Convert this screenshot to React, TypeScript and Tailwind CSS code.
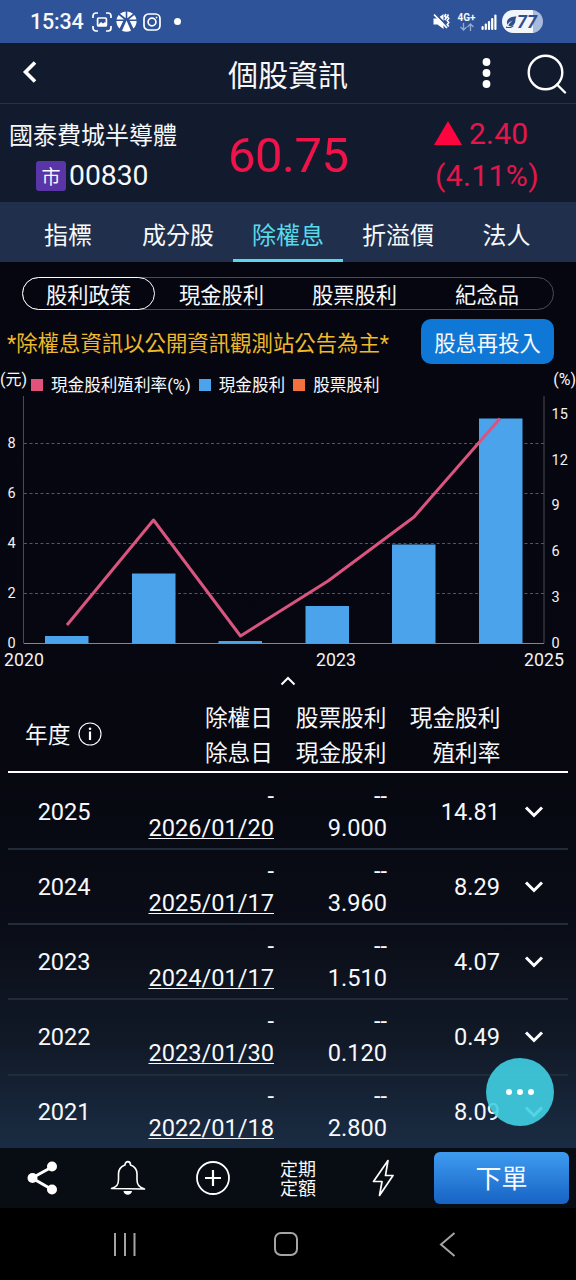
import React from "react";

const tabs = ["指標", "成分股", "除權息", "折溢價", "法人"];

const subTabs = ["股利政策", "現金股利", "股票股利", "紀念品"];

const legend = [
  { label: "現金股利殖利率(%)", color: "bg-[#e0517c]", gap: "mr-[8px]" },
  { label: "現金股利", color: "bg-[#4ba3ec]", gap: "mr-[8px]" },
  { label: "股票股利", color: "bg-[#f2713f]", gap: "" },
];

const rows = [
  { year: "2025", date: "2026/01/20", cash: "9.000", rate: "14.81" },
  { year: "2024", date: "2025/01/17", cash: "3.960", rate: "8.29" },
  { year: "2023", date: "2024/01/17", cash: "1.510", rate: "4.07" },
  { year: "2022", date: "2023/01/30", cash: "0.120", rate: "0.49" },
  { year: "2021", date: "2022/01/18", cash: "2.800", rate: "8.09" },
];

// chart coordinates
const bars = [
  { x: 45, y: 241 },
  { x: 132, y: 178.5 },
  { x: 218.5, y: 246 },
  { x: 305.5, y: 211 },
  { x: 392, y: 149.5 },
  { x: 479, y: 23.5 },
];

const leftTicks = [
  { v: "8", y: 48.5 },
  { v: "6", y: 98.5 },
  { v: "4", y: 148.5 },
  { v: "2", y: 198.5 },
  { v: "0", y: 248.5 },
];

const rightTicks = [
  { v: "15", y: 18.5 },
  { v: "12", y: 64.5 },
  { v: "9", y: 110 },
  { v: "6", y: 156 },
  { v: "3", y: 201.5 },
  { v: "0", y: 247.5 },
];

function StatusBar() {
  return (
    <div className="flex h-[43px] shrink-0 items-center bg-[#2f5398] pl-[30px] pr-[33px]">
      <span className="w-[62px] text-[21.5px] font-medium leading-none tracking-[-0.2px]">15:34</span>
      <svg width="20" height="20" viewBox="0 0 20 20" fill="none" stroke="#fff" strokeWidth="1.7">
        <path d="M1 6V4a3 3 0 0 1 3-3h2M14 1h2a3 3 0 0 1 3 3v2M19 14v2a3 3 0 0 1-3 3h-2M6 19H4a3 3 0 0 1-3-3v-2" />
        <rect x="5.6" y="6" width="8.800" height="8" rx="1" />
        <path d="M6 13l3-3 2 1.5 2-1.5 1 1v3H6z" fill="#fff" stroke="none" />
      </svg>
      <svg className="ml-[4px]" width="21" height="21" viewBox="0 0 21 21" fill="#fff">
        <path d="M9.700 0.500v6.800L4 2.700A10 10 0 0 1 9.700.5zM11.300.5v6.800L17 2.700A10 10 0 0 0 11.300.5z" />
        <path d="M2.700 4l5.500 4.500H.500A10 10 0 0 1 2.700 4zM18.300 4l-5.500 4.500h7.700A10 10 0 0 0 18.300 4z" />
        <path d="M.4 10h6.800L3.600 17.500A10 10 0 0 1 .4 10zM20.600 10h-6.800l3.600 7.500a10 10 0 0 0 3.200-7.500z" />
        <path d="M10.500 9.500L15 19.800q-4.500 2-9 0z" />
      </svg>
      <svg className="ml-[6px]" width="18" height="18" viewBox="0 0 18 18" fill="none" stroke="#fff" strokeWidth="1.7">
        <rect x="1" y="1" width="16" height="16" rx="4.500" />
        <circle cx="9" cy="9" r="3.900" />
        <circle cx="13.500" cy="4.500" r="0.500" fill="#fff" strokeWidth="1" />
      </svg>
      <span className="ml-[13px] size-[6.500px] rounded-full bg-white" />

      <div className="ml-auto flex items-center">
        <svg width="17" height="17" viewBox="0 0 17 17" fill="none" stroke="#fff">
          <path d="M0.500 5.500h4l6-4.500v15l-6-4.500h-4z" fill="#fff" stroke="none" />
          <path d="M2 0.500l14 14" stroke="#2f5398" strokeWidth="1.800" />
          <path d="M1 1.500l13 13.500" strokeWidth="1.800" />
          <path d="M13 1l-1.300 2 1.500 2-1.500 2M15.500 1.500l-1.300 2 1.500 2-1.500 2 1.500 2-1.500 2 1.500 2" strokeWidth="1.600" />
        </svg>
        <div className="ml-[6px] flex w-[21px] flex-col items-center">
          <span className="text-[10px] font-bold leading-[10px]">4G+</span>
          <svg width="14" height="8" viewBox="0 0 14 8" fill="none" stroke="#91a9d5" strokeWidth="1.300">
            <path d="M3.500 0v7M0.500 4l3 3 3-3M10.500 8V1M7.500 4l3-3 3 3" />
          </svg>
        </div>
        <svg className="ml-[4px]" width="16" height="16" viewBox="0 0 16 16" fill="#fff">
          <rect x="0.500" y="12" width="2.200" height="4" rx="1" />
          <rect x="3.700" y="9.500" width="2.200" height="6.500" rx="1" />
          <rect x="6.900" y="7" width="2.200" height="9" rx="1" />
          <rect x="10.100" y="4" width="2.200" height="12" rx="1" />
          <rect x="13.300" y="0.500" width="2.200" height="15.500" rx="1" />
        </svg>
        <div className="ml-[5px] flex h-[23px] w-[41px] items-center rounded-full bg-[linear-gradient(90deg,#f1f5fc_76%,#a9bbdc_76%)] pl-[4px] text-[#2f4f8c]">
          <svg width="11" height="12" viewBox="0 0 12 13" fill="currentColor">
            <path d="M11.500 0.500C6 0 1 2.500 1 7c0 1 .3 1.800.7 2.400C3 7 5 5.500 8 4.500 5.500 6 3.500 8 2.500 10.500 7.500 12.500 10.500 8 10.300 4c.1-1.500.5-2.500 1.200-3.500z" />
            <path d="M0 12c3 1.200 6 .6 8-1.500" fill="none" stroke="currentColor" strokeWidth="1.200" />
          </svg>
          <span className="text-[18px] font-bold italic leading-none">77</span>
        </div>
      </div>
    </div>
  );
}

function Header() {
  return (
    <div className="flex h-[61px] shrink-0 items-center border-b border-[#243250] bg-[#121b2e] pl-[22px] pr-[9px]">
      <svg className="-mt-[2px]" width="15" height="22" viewBox="0 0 15 22" fill="none" stroke="#fff" strokeWidth="3.600">
        <path d="M13 1.500L3.500 11l9.500 9.500" />
      </svg>
      <h1 className="ml-auto pt-[5px] text-[30px] leading-none">個股資訊</h1>
      <svg className="-mt-[1px] ml-[134px]" width="9" height="30" viewBox="0 0 9 30" fill="#fff">
        <circle cx="4.500" cy="4" r="3.900" />
        <circle cx="4.500" cy="15" r="3.900" />
        <circle cx="4.500" cy="26" r="3.900" />
      </svg>
      <svg className="ml-[36px] mt-[2px]" width="40" height="40" viewBox="0 0 40 40" fill="none" stroke="#fff" strokeWidth="2.400">
        <circle cx="18.500" cy="18.500" r="16.800" />
        <path d="M30 30.500l8 8" strokeLinecap="round" />
      </svg>
    </div>
  );
}

function Quote() {
  return (
    <div className="flex h-[98px] shrink-0 bg-[#121b2e]">
      <div className="flex w-[219px] flex-col pl-[9px] pt-[18px]">
        <div className="whitespace-nowrap text-[24px] leading-[28px]">國泰費城半導體</div>
        <div className="ml-[27px] mt-[8px] flex items-center">
          <span className="flex h-[30px] w-[30px] items-center justify-center rounded-[3px] bg-[#5a35a8] pt-[3px] text-[19px] leading-none">
            市
          </span>
          <span className="ml-[3px] pt-[1px] text-[28.300px] leading-[34px]">00830</span>
        </div>
      </div>
      <div className="w-[215px] pl-[9px] pt-[24px] text-[49px] leading-[56px] tracking-[-0.500px] text-[#f0134a]">60.75</div>
      <div className="text-[30px] leading-[42px] text-[#e4164a]">
        <div className="flex items-center pt-[9px]">
          <svg className="-mt-[2px]" width="28" height="24" viewBox="0 0 28 24" fill="#ff0540">
            <path d="M14 0l14 24H0z" />
          </svg>
          <span className="ml-[7px] tracking-[0.200px]">2.40</span>
        </div>
        <div className="pl-[1px] tracking-[0.400px]">(4.11%)</div>
      </div>
    </div>
  );
}

function Tabs() {
  return (
    <div className="flex h-[60px] shrink-0 bg-[#202f4b] px-[13px]">
      {tabs.map((tab) => (
        <div
          key={tab}
          className={
            tab === "除權息"
              ? "flex w-[110px] justify-center border-b-[3px] border-[#57d9ea] pt-[17px] text-[24px] leading-[34px] text-[#57d9ea]"
              : "flex w-[110px] justify-center pt-[17px] text-[24px] leading-[34px] last:w-[107px]"
          }
        >
          {tab}
        </div>
      ))}
    </div>
  );
}

function Chart() {
  return (
    <svg className="block shrink-0" width="576" height="275" viewBox="0 0 576 275">
      {leftTicks.slice(0, 4).map((t) => (
        <path key={t.v} d={`M24 ${t.y}H544`} stroke="#55575d" strokeDasharray="3 2.500" />
      ))}
      <path d="M24 248.500H544" stroke="#85878c" />
      <path d="M23.500 1V248.500M544 1V248.500" stroke="#4a4b52" />
      {bars.map((b) => (
        <rect key={b.x} x={b.x} y={b.y} width="43.500" height={248.5 - b.y} fill="#4ba3ec" />
      ))}
      <path
        d="M67 230L153.500 125L240.500 241L328 186L414 122L500 23.500"
        fill="none"
        stroke="#d95580"
        strokeWidth="3"
        strokeLinejoin="round"
      />
      <g fill="#f2f2f4" fontSize="14.500">
        {leftTicks.map((t) => (
          <text key={t.v} x="7.500" y={t.y + 4.5}>
            {t.v}
          </text>
        ))}
        {rightTicks.map((t) => (
          <text key={t.v} x="551.500" y={t.y + 5}>
            {t.v}
          </text>
        ))}
      </g>
      <g fill="#f2f2f4" fontSize="17.700" textAnchor="middle">
        <text x="24" y="271">2020</text>
        <text x="336" y="271">2023</text>
        <text x="544" y="271">2025</text>
      </g>
    </svg>
  );
}

function ChevronDown() {
  return (
    <svg width="20" height="14" viewBox="0 0 20 14" fill="none" stroke="#fff" strokeWidth="3">
      <path d="M2 2.500l8 8 8-8" />
    </svg>
  );
}

function TableHead() {
  return (
    <div className="mx-[8px] flex h-[81px] shrink-0 border-b-2 border-white text-[22.700px] leading-[34.500px]">
      <div className="flex w-[120px] items-center pl-[17px] pt-[5px]">
        <span className="pt-[4px]">年度</span>
        <svg className="ml-[8px]" width="24" height="24" viewBox="0 0 24 24" fill="none" stroke="#fff">
          <circle cx="12" cy="12" r="11" strokeWidth="1.100" />
          <path d="M12 9.500V18" strokeWidth="2.200" />
          <circle cx="12" cy="6.700" r="1.300" fill="#fff" stroke="none" />
        </svg>
      </div>
      <div className="w-[145px] pt-[10px] text-right">
        <div>除權日</div>
        <div>除息日</div>
      </div>
      <div className="w-[113.500px] pt-[10px] text-right">
        <div>股票股利</div>
        <div>現金股利</div>
      </div>
      <div className="w-[114px] pt-[10px] text-right">
        <div>現金股利</div>
        <div>殖利率</div>
      </div>
    </div>
  );
}

function BottomBar() {
  return (
    <div className="flex h-[60px] shrink-0 items-center bg-[#070d12] pl-[27px] pr-[7px]">
      <svg width="31" height="34" viewBox="0 0 31 34" fill="#fff">
        <path d="M25 6L5 17l20 11.500" fill="none" stroke="#fff" strokeWidth="3" />
        <circle cx="25" cy="5.500" r="5" />
        <circle cx="5.500" cy="17" r="5" />
        <circle cx="25" cy="28.500" r="5" />
      </svg>
      <svg className="ml-[52px]" width="36" height="36" viewBox="0 0 36 36" fill="none" stroke="#fff" strokeWidth="1.600">
        <path
          d="M1.500 28.500c5-1.500 7-3.500 7-9v-5.500c0-4.500 2.300-7.500 6.500-9 0-4.500 5.500-4.500 5.500 0 4.200 1.500 6.500 4.500 6.500 9v5.500c0 5.500 2 7.500 7.500 9.500z"
          strokeLinejoin="round"
        />
        <path d="M13.500 31h8.500c-.5 5-8 5-8.500 0z" fill="#fff" stroke="none" />
      </svg>
      <svg className="ml-[50px]" width="34" height="34" viewBox="0 0 34 34" fill="none" stroke="#fff">
        <circle cx="17" cy="17" r="16" strokeWidth="1.800" />
        <path d="M17 9v16M9 17h16" strokeWidth="2.200" />
      </svg>
      <div className="ml-[50px] w-[37px] pt-[2px] text-[18px] leading-[19px]">
        <div>定期</div>
        <div>定額</div>
      </div>
      <svg className="ml-[55px]" width="22" height="38" viewBox="0 0 22 38" fill="none" stroke="#fff" strokeWidth="1.700">
        <path d="M16 1.500L1.500 22.500H10L7.500 36.500 21 16.500h-7.500z" strokeLinejoin="round" />
      </svg>
      <button className="ml-auto h-[52px] w-[135px] rounded-[6px] bg-linear-to-b from-[#3f9cf0] to-[#1763c4] pt-[3px] text-[26px] leading-[49px]">
        下單
      </button>
    </div>
  );
}

function SystemNav() {
  return (
    <div className="flex h-[72px] shrink-0 items-center bg-black pl-[113px]">
      <svg width="23" height="23" viewBox="0 0 23 23" stroke="#a4a4a4" strokeWidth="2">
        <path d="M2 0v23M12 0v23M21.500 0v23" />
      </svg>
      <svg className="ml-[138px]" width="24" height="24" viewBox="0 0 24 24" fill="none" stroke="#a4a4a4" strokeWidth="2">
        <rect x="1" y="1" width="22" height="22" rx="6" />
      </svg>
      <svg className="ml-[141px]" width="17" height="25" viewBox="0 0 17 25" fill="none" stroke="#a4a4a4" strokeWidth="2">
        <path d="M15.500 1L2 12.500l13.500 11.500" />
      </svg>
    </div>
  );
}

export default function App() {
  return (
    <div className="relative flex h-[1280px] w-[576px] flex-col overflow-hidden bg-black font-['Roboto','Noto_Sans_CJK_TC',sans-serif] text-[#f7f8fb]">
      <StatusBar />
      <Header />
      <Quote />
      <Tabs />

      <div className="flex h-[886px] shrink-0 flex-col overflow-hidden bg-[linear-gradient(180deg,#05060f_0%,#06070f_55%,#0a0d17_75%,#111927_88%,#1a2c43_100%)]">
        {/* Sub tabs */}
        <div className="ml-[22px] mt-[15px] flex h-[33px] w-[532px] shrink-0 rounded-full border border-[#4b4c53]">
          {subTabs.map((tab, index) => (
            <div
              key={tab}
              className={
                index === 0
                  ? "-my-px -ml-px flex w-[133px] shrink-0 items-center justify-center rounded-full border-[1.500px] border-white pt-[5px] text-[21.300px] leading-none"
                  : "flex w-[133px] shrink-0 items-center justify-center pt-[5px] text-[21.300px] leading-none last:w-[132px]"
              }
            >
              {tab}
            </div>
          ))}
        </div>

        {/* Notice and reinvest button */}
        <div className="mt-[9px] flex h-[45px] shrink-0 items-center justify-between pl-[7px] pr-[22px]">
          <span className="whitespace-nowrap pt-[5px] text-[21.400px] leading-[30px] text-[#eeb92b]">
            *除權息資訊以公開資訊觀測站公告為主*
          </span>
          <button className="h-[45px] w-[133px] rounded-[10px] bg-[#0f78d6] pt-[5px] text-[21.300px] leading-none">
            股息再投入
          </button>
        </div>

        {/* Legend */}
        <div className="flex h-[31px] shrink-0 items-center text-[16.600px] leading-[20px]">
          <span className="w-[31px] pt-[1px] text-[16px]">(元)</span>
          {legend.map((item) => (
            <div key={item.label} className={`flex items-center whitespace-nowrap pt-[10px] ${item.gap}`}>
              <span className={`mr-[8px] size-[12px] ${item.color}`} />
              <span className="pt-[2px]">{item.label}</span>
            </div>
          ))}
          <span className="ml-auto pt-[1px] text-[16px]">(%)</span>
        </div>

        <Chart />

        <div className="flex h-[22px] shrink-0 items-center justify-center">
          <svg width="16" height="10" viewBox="0 0 16 10" fill="none" stroke="#fff" strokeWidth="2">
            <path d="M1.500 8.500L8 2l6.500 6.500" />
          </svg>
        </div>

        <TableHead />

        <div className="mt-[2px] shrink-0">
          {rows.map((row) => (
            <div
              key={row.year}
              className="mx-[8px] flex h-[75.150px] items-center border-b-2 border-[#202c39] text-[23.600px] leading-[32px]"
            >
              <div className="w-[112px] text-center tracking-[-0.100px]">{row.year}</div>
              <div className="w-[154px] text-right">
                <div>-</div>
                <div className="underline decoration-1 underline-offset-[2px]">{row.date}</div>
              </div>
              <div className="w-[113px] text-right">
                <div>--</div>
                <div>{row.cash}</div>
              </div>
              <div className="w-[113px] text-right">{row.rate}</div>
              <div className="ml-[24px]">
                <ChevronDown />
              </div>
            </div>
          ))}
        </div>
      </div>

      <BottomBar />
      <SystemNav />

      {/* Floating menu button */}
      <button className="absolute left-[486px] top-[1058px] flex h-[68px] w-[68px] items-center justify-center gap-[5px] rounded-full bg-[#40d0e3]/90">
        <span className="size-[6px] rounded-full bg-white" />
        <span className="size-[6px] rounded-full bg-white" />
        <span className="size-[6px] rounded-full bg-white" />
      </button>
    </div>
  );
}
